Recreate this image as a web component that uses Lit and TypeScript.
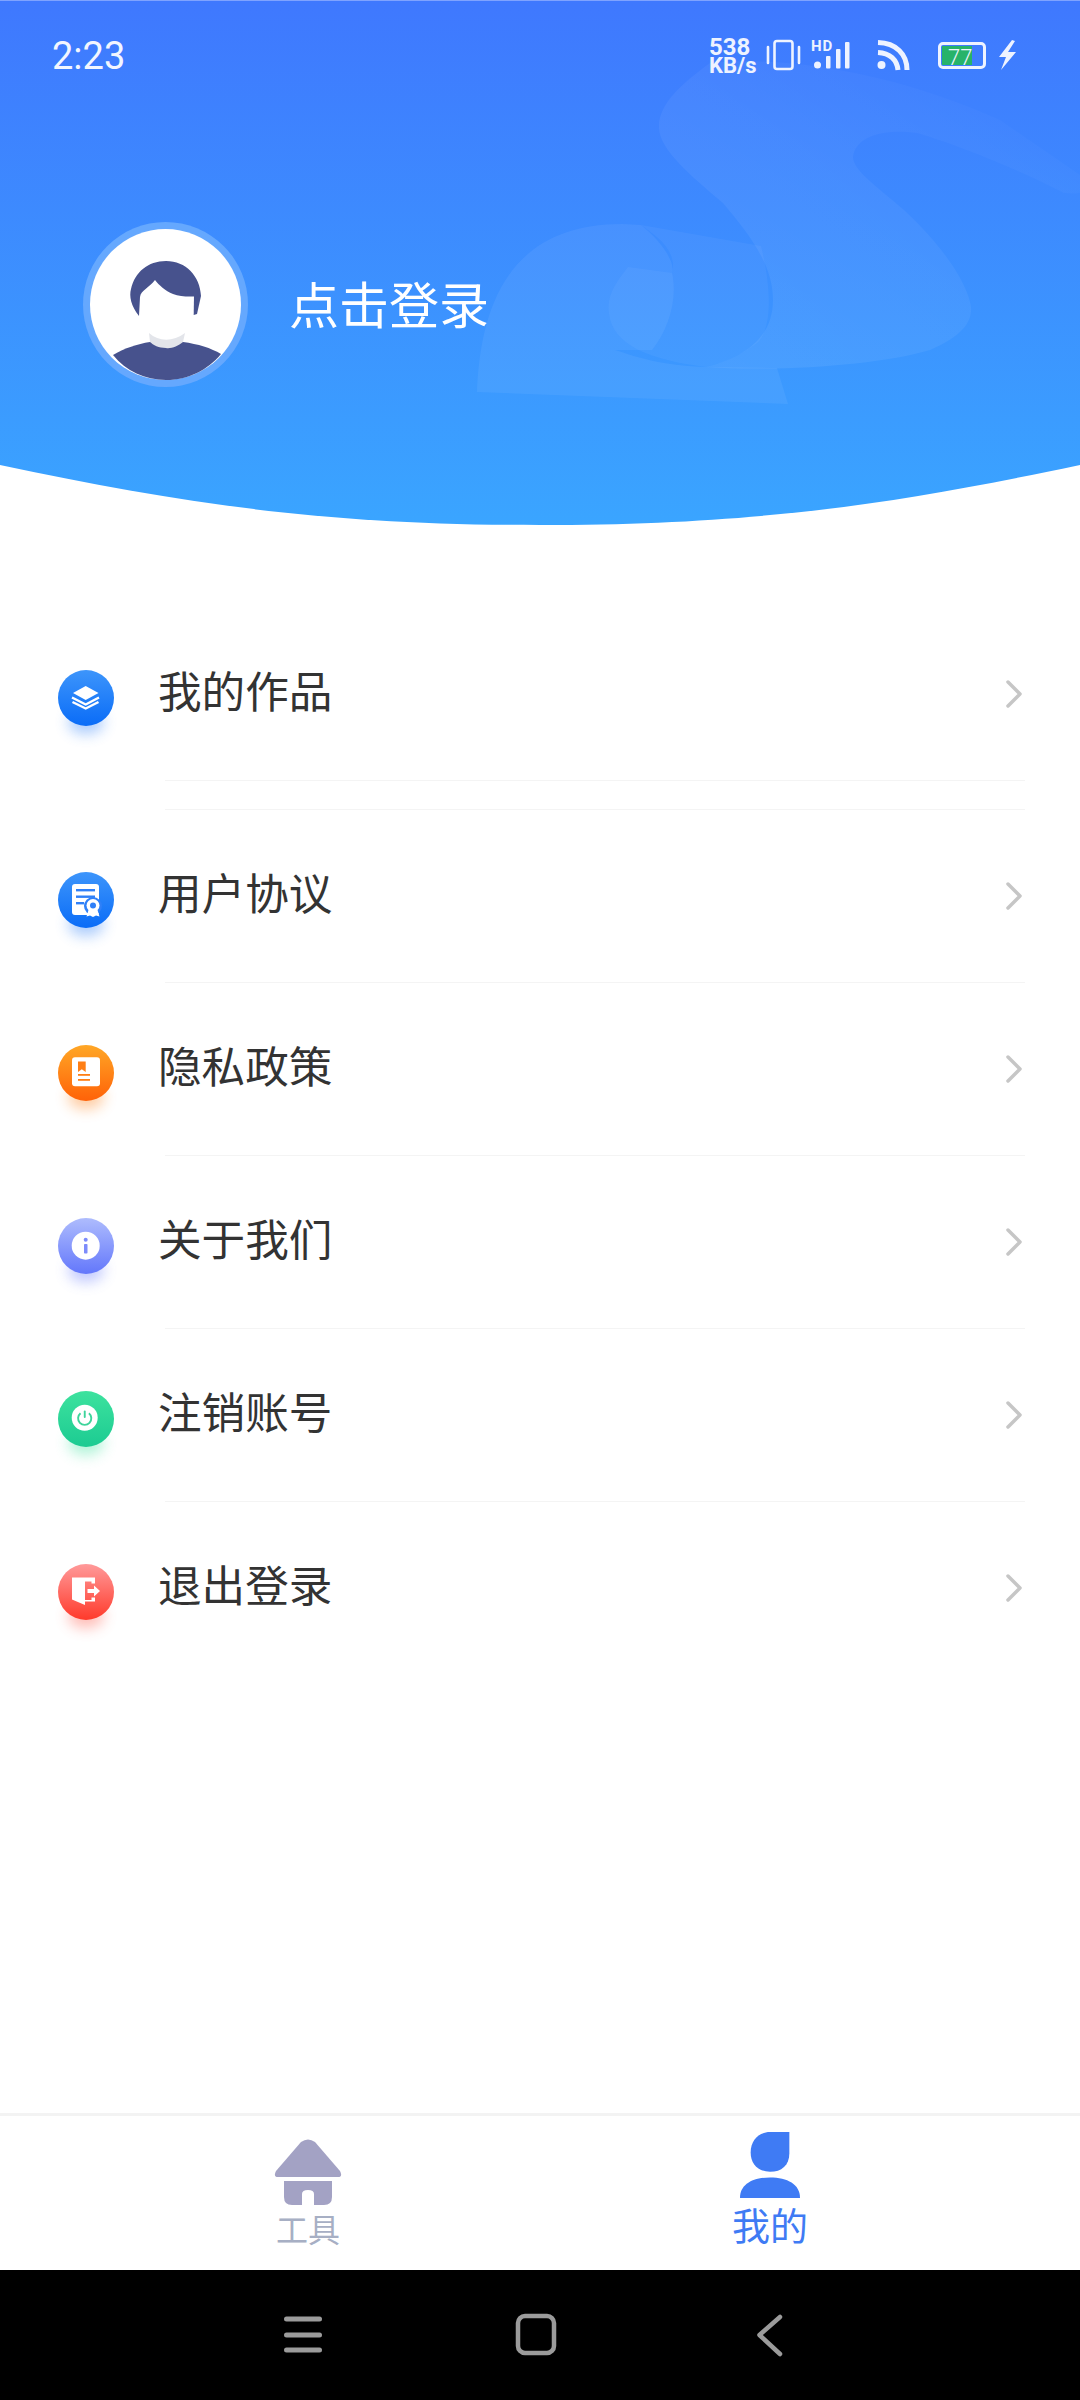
import { LitElement, html, css, svg } from "lit";
import { customElement } from "lit/decorators.js";

const icons = {
  layers: svg`<path d="M27.700 16 40.500 23 27.700 30 15 23Z" fill="#fff"/><path d="M14 27.500 27.700 34.500 41 27.500" stroke="#fff" stroke-width="2.400" fill="none" stroke-linejoin="round"/><path d="M14.500 32 27.700 38.500 40.500 32" stroke="#fff" stroke-width="2.400" fill="none" stroke-linejoin="round"/>`,
  cert: svg`<rect x="14" y="12" width="27" height="31" rx="3" fill="#fff"/><rect x="18" y="17" width="19" height="2.400" fill="#2f80f8"/><rect x="18" y="23.500" width="19" height="2.400" fill="#2f80f8"/><rect x="18" y="30" width="8" height="2.400" fill="#2f80f8"/><circle cx="35" cy="34" r="9" fill="#2f80f8"/><circle cx="35" cy="33.500" r="6.500" fill="#fff"/><circle cx="35" cy="33.500" r="3" fill="#2f80f8"/><path d="M30.500 38 28.500 44.500 32 43.500 35 45 38 43.500 41.500 44.500 39.500 38Z" fill="#fff"/>`,
  privacy: svg`<rect x="14" y="12.300" width="28" height="29" rx="3" fill="#fff"/><path d="M20 16.500H27.700V27L23.800 24.300 20 27Z" fill="#ff7f15"/><rect x="20" y="29" width="12" height="1.800" fill="#ff7f15"/><rect x="20" y="34" width="12" height="1.800" fill="#ff7f15"/>`,
  info: svg`<circle cx="27.700" cy="27.700" r="14" fill="#fff"/><circle cx="27.700" cy="21.700" r="2" fill="#7d8cfb"/><rect x="26" y="26" width="3.500" height="9.500" rx=".8" fill="#7d8cfb"/>`,
  power: svg`<circle cx="26.700" cy="26.700" r="13" fill="#fff"/><path d="M22.500 22.200a6.600 6.600 0 1 0 8.400 0" fill="none" stroke="#3ed49b" stroke-width="1.900"/><rect x="25.800" y="19.500" width="1.900" height="7.500" rx=".9" fill="#3ed49b"/>`,
  exit: svg`<path d="M14 13.500H37V19.500H33.500V17.500H27V36H33.500V33.500H37V37.500H27V41L14 35.500Z" fill="#fff"/><path d="M29.500 25H36V21.500L42 27 36 32.500V29H29.500Z" fill="#fff"/>`,
};

const rows = [
  { label: "我的作品", icon: icons.layers, cls: "blue" },
  { label: "用户协议", icon: icons.cert, cls: "blue" },
  { label: "隐私政策", icon: icons.privacy, cls: "orange" },
  { label: "关于我们", icon: icons.info, cls: "violet" },
  { label: "注销账号", icon: icons.power, cls: "green" },
  { label: "退出登录", icon: icons.exit, cls: "red" },
];

@customElement("app-root")
export class AppRoot extends LitElement {
  static styles = css`
    :host { display: block; width: 1080px; height: 2400px; background: #fff; font-family: "Roboto", "Noto Sans CJK SC", sans-serif; overflow: hidden; }
    .page { display: flex; flex-direction: column; height: 2400px; }
    .hero { position: relative; height: 530px; flex: none; }
    .hero-art { position: absolute; inset: 0; width: 1080px; height: 530px; }
    .hero-content { position: relative; display: flex; flex-direction: column; height: 100%; }
    .status { display: flex; align-items: center; justify-content: space-between; height: 56px; margin-top: 28px; padding: 0 60px 0 52px; }
    .time { font-size: 38px; color: #f2f6ff; }
    .status-right { display: block; width: 320px; height: 56px; }
    .profile { display: flex; align-items: center; gap: 41px; margin-top: 138px; padding-left: 83px; }
    .avatar { width: 165px; height: 165px; flex: none; display: block; }
    .name { font-size: 50px; color: #fff; line-height: 60px; position: relative; top: 2px; }
    .list { flex: 1; display: flex; flex-direction: column; padding-top: 78px; }
    .row { display: flex; align-items: center; height: 172px; }
    .badge-wrap { position: relative; width: 56px; height: 56px; margin-left: 58px; flex: none; top: 4px; }
    .badge { position: relative; width: 56px; height: 56px; border-radius: 50%; display: block; }
    .badge svg { width: 56px; height: 56px; display: block; }
    .glow { position: absolute; left: 10px; right: 10px; bottom: -8px; height: 24px; border-radius: 50%; filter: blur(7px); opacity: .4; }
    .blue .badge { background: linear-gradient(180deg, #3d95fb, #0a6cf7); }
    .blue .glow { background: #2f80f8; }
    .orange .badge { background: linear-gradient(180deg, #ffa726, #ff6208); }
    .orange .glow { background: #ff7f15; }
    .violet .badge { background: linear-gradient(180deg, #aebcfd, #6377fb); }
    .violet .glow { background: #6377fb; }
    .green .badge { background: linear-gradient(180deg, #3de29e, #1ccb92); }
    .green .glow { background: #3de29e; }
    .red .badge { background: linear-gradient(180deg, #ff9a9a, #ff3a2b); }
    .red .glow { background: #ff5a4b; }
    .label { margin-left: 44px; font-size: 43.600px; line-height: 52px; color: #333; flex: 1; }
    .chev { width: 16px; height: 30px; margin-right: 58px; flex: none; }
    .divider { height: 1px; background: #f4f4f4; margin: 0 55px 0 165px; flex: none; }
    .gap { height: 28px; flex: none; }
    .tabs { display: grid; grid-template-columns: 1fr 1fr; height: 157px; border-top: 3px solid #f3f3f3; box-sizing: border-box; flex: none; }
    .tab { display: flex; flex-direction: column; align-items: center; }
    .tab svg { display: block; }
    .tab.home { padding-left: 76px; padding-top: 23px; }
    .tab.mine { padding-right: 80px; padding-top: 16px; }
    .tab-label { font-size: 32px; line-height: 36px; color: #a7afc4; margin-top: 8px; }
    .mine .tab-label { font-size: 38px; line-height: 44px; color: #3f7bf4; margin-top: 7px; }
    .nav { height: 130px; background: #000; display: block; flex: none; }
    .nav svg { display: block; width: 1080px; height: 130px; }
  `;

  renderRow(r: (typeof rows)[number]) {
    return html`<div class="row ${r.cls}">
      <div class="badge-wrap">
        <div class="glow"></div>
        <div class="badge"><svg viewBox="0 0 56 56">${r.icon}</svg></div>
      </div>
      <div class="label">${r.label}</div>
      <svg class="chev" viewBox="0 0 16 30"><path d="M2 3 14 15 2 27" fill="none" stroke="#c6c6c6" stroke-width="3.500" stroke-linecap="round" stroke-linejoin="round"/></svg>
    </div>`;
  }

  render() {
    return html`<div class="page">
      <div class="hero">
        <svg class="hero-art" viewBox="0 0 1080 530">
          <defs>
            <linearGradient id="sky" x1="0" y1="0" x2="0" y2="1"><stop offset="0" stop-color="#3f78fe"/><stop offset="1" stop-color="#3aa5ff"/></linearGradient>
            <linearGradient id="swoosh" gradientUnits="userSpaceOnUse" x1="760" y1="380" x2="950" y2="60">
              <stop offset="0" stop-color="#fff" stop-opacity=".07"/>
              <stop offset=".6" stop-color="#fff" stop-opacity=".045"/>
              <stop offset="1" stop-color="#fff" stop-opacity=".012"/>
            </linearGradient>
          </defs>
          <path d="M0 0H1080V465C900 503 760 525 540 525S180 503 0 465Z" fill="url(#sky)"/>
          <rect x="0" y="0" width="1080" height="1" fill="#7fa3ff"/>
          <path d="M477 392C480 320 500 224 622 224L641 225C660 240 676 262 672 273 678 300 668 330 652 350L609 350C612 345 640 365 706 367L777 368 788 404Z" fill="#fff" fill-opacity=".06"/>
          <path d="M641 225 761 246C772 290 772 330 757 343 740 356 725 362 706 367 650 360 612 345 609 313 606 295 618 280 628 267L672 273C678 250 655 235 641 225Z" fill="#fff" fill-opacity=".045"/>
          <path d="M710 63C680 85 658 105 659 128 660 150 690 175 723 203 750 235 773 265 773 300 773 330 755 355 706 367 780 372 880 365 930 350 965 335 972 320 971 307 968 285 945 248 904 210 875 185 853 170 853 157 855 138 880 128 917 133 960 145 1030 175 1064 193 1090 195 1080 190 1080 175L1000 120C900 75 790 55 710 63Z" fill="url(#swoosh)"/>
        </svg>
        <div class="hero-content">
          <div class="status">
            <span class="time">2:23</span>
            <svg class="status-right" viewBox="700 28 320 56">
              <g fill="#eef3ff" font-family="Roboto" font-weight="700">
                <text x="709" y="55" font-size="24">538</text>
                <text x="709" y="73" font-size="22">KB/s</text>
                <text x="811" y="50.500" font-size="15" letter-spacing="1">HD</text>
              </g>
              <g fill="none" stroke="#eef3ff" stroke-width="2.600" stroke-linecap="round">
                <rect x="774.500" y="41" width="18" height="28" rx="2.500"/>
                <path d="M768 47V63M799 47V63"/>
              </g>
              <g fill="#eef3ff">
                <circle cx="817.500" cy="65" r="3.500"/>
                <rect x="826" y="56" width="4.500" height="12.500" rx="1"/>
                <rect x="836" y="49" width="4.500" height="19.500" rx="1"/>
                <rect x="845" y="42" width="4.500" height="26.500" rx="1"/>
                <circle cx="881.500" cy="65" r="4"/>
              </g>
              <g fill="none" stroke="#eef3ff" stroke-width="5">
                <path d="M878 52.500C890 53 897 60 898 70"/>
                <path d="M878 42.500C896 43 907 54 907 70"/>
              </g>
              <rect x="939.500" y="43.500" width="45" height="24" rx="3.500" fill="none" stroke="#eef3ff" stroke-width="3"/>
              <rect x="942" y="46" width="30" height="19" fill="#27b36a"/>
              <text x="948" y="64.500" font-size="22" fill="#eef3ff" font-family="Roboto" font-weight="300">77</text>
              <path d="M1012 40 999 57H1006L1001 70 1016 52H1008L1015 41Z" fill="#eef3ff"/>
            </svg>
          </div>
          <div class="profile">
            <svg class="avatar" viewBox="0 0 165 165">
              <circle cx="82.500" cy="82.500" r="82.500" fill="#65a8fe"/>
              <circle cx="82.500" cy="82.500" r="75.500" fill="#fff"/>
              <path d="M30 133C42 126 54 122 67 120L100 120C115 122 128 126 138 132 125 148 105 158 83 158 62 158 43 149 30 133Z" fill="#47528d"/>
              <path d="M66 111C76 120 90 120 102 111L100 120C95 124 88 127 83 126 76 126 70 123 67 120Z" fill="#e3e5ea"/>
              <path d="M56 94C48 84 46 74 48 67 52 50 65 39 83 39 103 39 117 54 118 74 108 75 98 75 90 72 82 69 76 63 72 58 66 66 58 68 57 75Z" fill="#47528d"/>
              <path d="M111 74 118 74 114 92 110.700 93Z" fill="#47528d"/>
            </svg>
            <div class="name">点击登录</div>
          </div>
        </div>
      </div>

      <div class="list">
        ${rows.map((r, i) => html`
          ${this.renderRow(r)}
          ${i < rows.length - 1 ? html`<div class="divider"></div>` : ""}
          ${i === 0 ? html`<div class="gap"></div><div class="divider"></div>` : ""}
        `)}
      </div>

      <div class="tabs">
        <div class="tab home">
          <svg width="68" height="66" viewBox="0 0 68 66">
            <path d="M27 3Q34-2 41 3L66 32Q69 38 64 38H4Q-1 38 2 32Z" fill="#a3a2c4"/>
            <path d="M10 42H58V58Q58 66 50 66H40V55Q40 51 34 51T28 55V66H18Q10 66 10 58Z" fill="#a3a2c4"/>
          </svg>
          <div class="tab-label">工具</div>
        </div>
        <div class="tab mine">
          <svg width="60" height="66" viewBox="0 0 62 68">
            <path d="M31 0H51V22C51 34 43 41 31 41 19 41 11 33 11 21 11 8 20 0 31 0Z" fill="#3f7bf4"/>
            <path d="M0 68C0 54 13 47 31 47S62 54 62 68Z" fill="#3f7bf4"/>
          </svg>
          <div class="tab-label">我的</div>
        </div>
      </div>

      <div class="nav">
        <svg viewBox="0 0 1080 130">
          <g fill="#9b9b9b">
            <rect x="284" y="46.500" width="38" height="5" rx="2.500"/>
            <rect x="284" y="62.500" width="38" height="5" rx="2.500"/>
            <rect x="284" y="77.500" width="38" height="5" rx="2.500"/>
          </g>
          <rect x="518" y="46" width="36" height="37" rx="7" fill="none" stroke="#9b9b9b" stroke-width="4.500"/>
          <path d="M780 47 759.500 65 780 84" fill="none" stroke="#9b9b9b" stroke-width="4.500" stroke-linecap="round" stroke-linejoin="round"/>
        </svg>
      </div>
    </div>`;
  }
}
